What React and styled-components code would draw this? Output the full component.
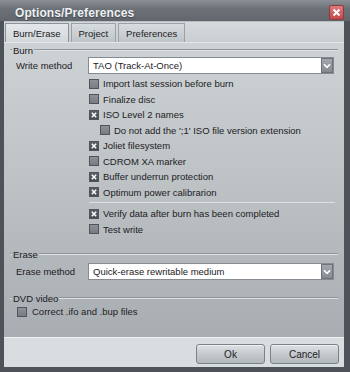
import styled, { createGlobalStyle } from "styled-components"

const GlobalStyle = createGlobalStyle`
  html, body {
    margin: 0;
    padding: 0;
    background: #4d5359;
  }
  body {
    font-family: "Liberation Sans", Arial, sans-serif;
    font-size: 9.5px;
    color: #1c2024;
  }
`

const burnOptions = [
  { label: "Import last session before burn", checked: false },
  { label: "Finalize disc", checked: false },
  { label: "ISO Level 2 names", checked: true },
  { label: "Do not add the ';1' ISO file version extension", checked: false, indent: true },
  { label: "Joliet filesystem", checked: true },
  { label: "CDROM XA marker", checked: false },
  { label: "Buffer underrun protection", checked: true },
  { label: "Optimum power calibrarion", checked: true },
]

const verifyOptions = [
  { label: "Verify data after burn has been completed", checked: true },
  { label: "Test write", checked: false },
]

function CheckBox({ checked }) {
  return (
    <Box $checked={checked}>
      {checked && (
        <svg width="6" height="6" viewBox="0 0 6 6">
          <path d="M0.8 0.8 L5.2 5.2 M5.2 0.8 L0.8 5.2" stroke="#ffffff" strokeWidth="1.5" />
        </svg>
      )}
    </Box>
  )
}

function Option({ label, checked, indent }) {
  return (
    <OptionRow $indent={indent}>
      <CheckBox checked={checked} />
      <span>{label}</span>
    </OptionRow>
  )
}

function Select({ value }) {
  return (
    <SelectBox>
      <span>{value}</span>
      <ArrowButton>
        <svg width="8" height="6" viewBox="0 0 8 6">
          <path d="M1 1.2 L4 4.4 L7 1.2" stroke="#ffffff" strokeWidth="1.6" fill="none" />
        </svg>
      </ArrowButton>
    </SelectBox>
  )
}

export default function App() {
  return (
    <>
      <GlobalStyle />
      <Window>
        <TitleBar>
          <Title>Options/Preferences</Title>
          <CloseButton>
            <svg width="9" height="9" viewBox="0 0 9 9">
              <path d="M1.5 1.5 L7.5 7.5 M7.5 1.5 L1.5 7.5" stroke="#ffffff" strokeWidth="2" />
            </svg>
          </CloseButton>
        </TitleBar>
        <Body>
          <TabStrip>
            <Tab $active>Burn/Erase</Tab>
            <Tab>Project</Tab>
            <Tab>Preferences</Tab>
          </TabStrip>
          <Panel>
            <GroupHeader><span>Burn</span></GroupHeader>
            <FieldRow>
              <FieldLabel>Write method</FieldLabel>
              <Select value="TAO (Track-At-Once)" />
            </FieldRow>
            <OptionList>
              {burnOptions.map(opt => (
                <Option key={opt.label} {...opt} />
              ))}
              <Separator />
              {verifyOptions.map(opt => (
                <Option key={opt.label} {...opt} />
              ))}
            </OptionList>

            <GroupHeader $gap={11}><span>Erase</span></GroupHeader>
            <FieldRow $gap={3}>
              <FieldLabel>Erase method</FieldLabel>
              <Select value="Quick-erase rewritable medium" />
            </FieldRow>

            <GroupHeader $gap={12}><span>DVD video</span></GroupHeader>
            <DvdRow>
              <CheckBox checked={false} />
              <span>Correct .ifo and .bup files</span>
            </DvdRow>
          </Panel>
          <ButtonBar>
            <Button>Ok</Button>
            <Button>Cancel</Button>
          </ButtonBar>
        </Body>
      </Window>
    </>
  )
}

const Window = styled.div`
  width: 350px;
  height: 372px;
  display: flex;
  flex-direction: column;
  background: #4d5359;
  box-sizing: border-box;
  padding-bottom: 5px;
`

const TitleBar = styled.div`
  height: 21px;
  display: flex;
  align-items: center;
  justify-content: space-between;
  padding: 0 6px 0 15px;
  background: linear-gradient(#8a9096, #6c7278 40%, #60666c);
`

const Title = styled.div`
  font-family: "Liberation Sans", Arial, sans-serif;
  font-weight: bold;
  font-size: 12px;
  letter-spacing: 0.1px;
  color: #eef1f3;
  text-shadow: 0 1px 1px #3f4449;
  margin-top: 4px;
`

const CloseButton = styled.div`
  width: 13px;
  height: 13px;
  margin-top: 4px;
  border: 1px solid #8e3b3d;
  border-radius: 2px;
  background: linear-gradient(#e07a7b, #c4484b);
  display: flex;
  align-items: center;
  justify-content: center;
`

const Body = styled.div`
  flex: 1;
  margin: 0 6px 0 4px;
  display: flex;
  flex-direction: column;
`

const TabStrip = styled.div`
  height: 21px;
  display: flex;
  align-items: flex-end;
  gap: 2px;
  padding-left: 1px;
  background: linear-gradient(#d5dadc, #c9ced1);
  border-top: 1px solid #b9bec2;
  box-sizing: border-box;
`

const Tab = styled.div`
  height: 19px;
  padding: 0 7px;
  display: flex;
  align-items: center;
  box-sizing: border-box;
  border: 1px solid ${p => (p.$active ? "#8b9196" : "#9ba1a6")};
  border-bottom: none;
  background: ${p => (p.$active ? "linear-gradient(#e4e8ea, #d2d7da)" : "linear-gradient(#d7dcde, #bfc4c8)")};
  color: #1c2024;
`

const Panel = styled.div`
  flex: 1;
  display: flex;
  flex-direction: column;
  padding: 1px 10px 0 6px;
  background: linear-gradient(#cdd2d5, #bcc1c4 50%, #a8adb1);
  border-top: 1px solid #e3e7e9;
`

const GroupHeader = styled.div`
  height: 12px;
  margin-top: ${p => p.$gap || 0}px;
  display: flex;
  align-items: center;
  gap: 1px;
  &::before {
    content: "";
    width: 2px;
    border-top: 1px solid #8f959a;
    border-bottom: 1px solid #dde1e3;
  }
  &::after {
    content: "";
    flex: 1;
    border-top: 1px solid #8f959a;
    border-bottom: 1px solid #dde1e3;
    margin-right: -4px;
  }
`

const FieldRow = styled.div`
  display: grid;
  grid-template-columns: 72px 1fr;
  align-items: center;
  margin-top: ${p => p.$gap || 1}px;
  padding-left: 6px;
`

const FieldLabel = styled.div`
  color: #1c2024;
`

const SelectBox = styled.div`
  height: 17px;
  box-sizing: border-box;
  border: 1px solid #858b90;
  background: #ffffff;
  display: flex;
  align-items: center;
  justify-content: space-between;
  padding-left: 4px;
`

const ArrowButton = styled.div`
  width: 12px;
  height: 15px;
  box-sizing: border-box;
  border: 1px solid #6d7378;
  background: linear-gradient(#a2a8ad, #858b91);
  display: flex;
  align-items: center;
  justify-content: center;
`

const OptionList = styled.div`
  display: flex;
  flex-direction: column;
  margin-top: 2px;
  padding-left: 79px;
`

const OptionRow = styled.div`
  height: 15.5px;
  display: flex;
  align-items: center;
  gap: 4px;
  padding-left: ${p => (p.$indent ? 11 : 0)}px;
`

const Box = styled.div`
  width: 10px;
  height: 10px;
  box-sizing: border-box;
  border: 1px solid #4f555a;
  background: ${p => (p.$checked ? "linear-gradient(#5a6066, #464c52)" : "linear-gradient(#8c9297, #767c81)")};
  display: flex;
  align-items: center;
  justify-content: center;
  flex-shrink: 0;
`

const Separator = styled.div`
  height: 6px;
  display: flex;
  align-items: center;
  margin-right: -1px;
  &::after {
    content: "";
    flex: 1;
    border-top: 1px solid #dde1e3;
    border-bottom: 1px solid #b8bdc1;
  }
`

const DvdRow = styled.div`
  height: 15.5px;
  display: flex;
  align-items: center;
  gap: 5px;
  padding-left: 7px;
`

const ButtonBar = styled.div`
  height: 30px;
  display: flex;
  justify-content: flex-end;
  align-items: flex-start;
  gap: 5px;
  padding: 6px 5px 0 0;
  box-sizing: border-box;
  background: #d8dde0;
  border-top: 1px solid #eef1f2;
`

const Button = styled.div`
  width: 69px;
  height: 20px;
  box-sizing: border-box;
  border: 1px solid #7b8287;
  border-radius: 3px;
  background: linear-gradient(#dde1e4, #c3c8cc 55%, #b3b8bc);
  box-shadow: inset 0 1px 0 #eef1f3;
  display: flex;
  align-items: center;
  justify-content: center;
  font-size: 10px;
  color: #1c2024;
`
